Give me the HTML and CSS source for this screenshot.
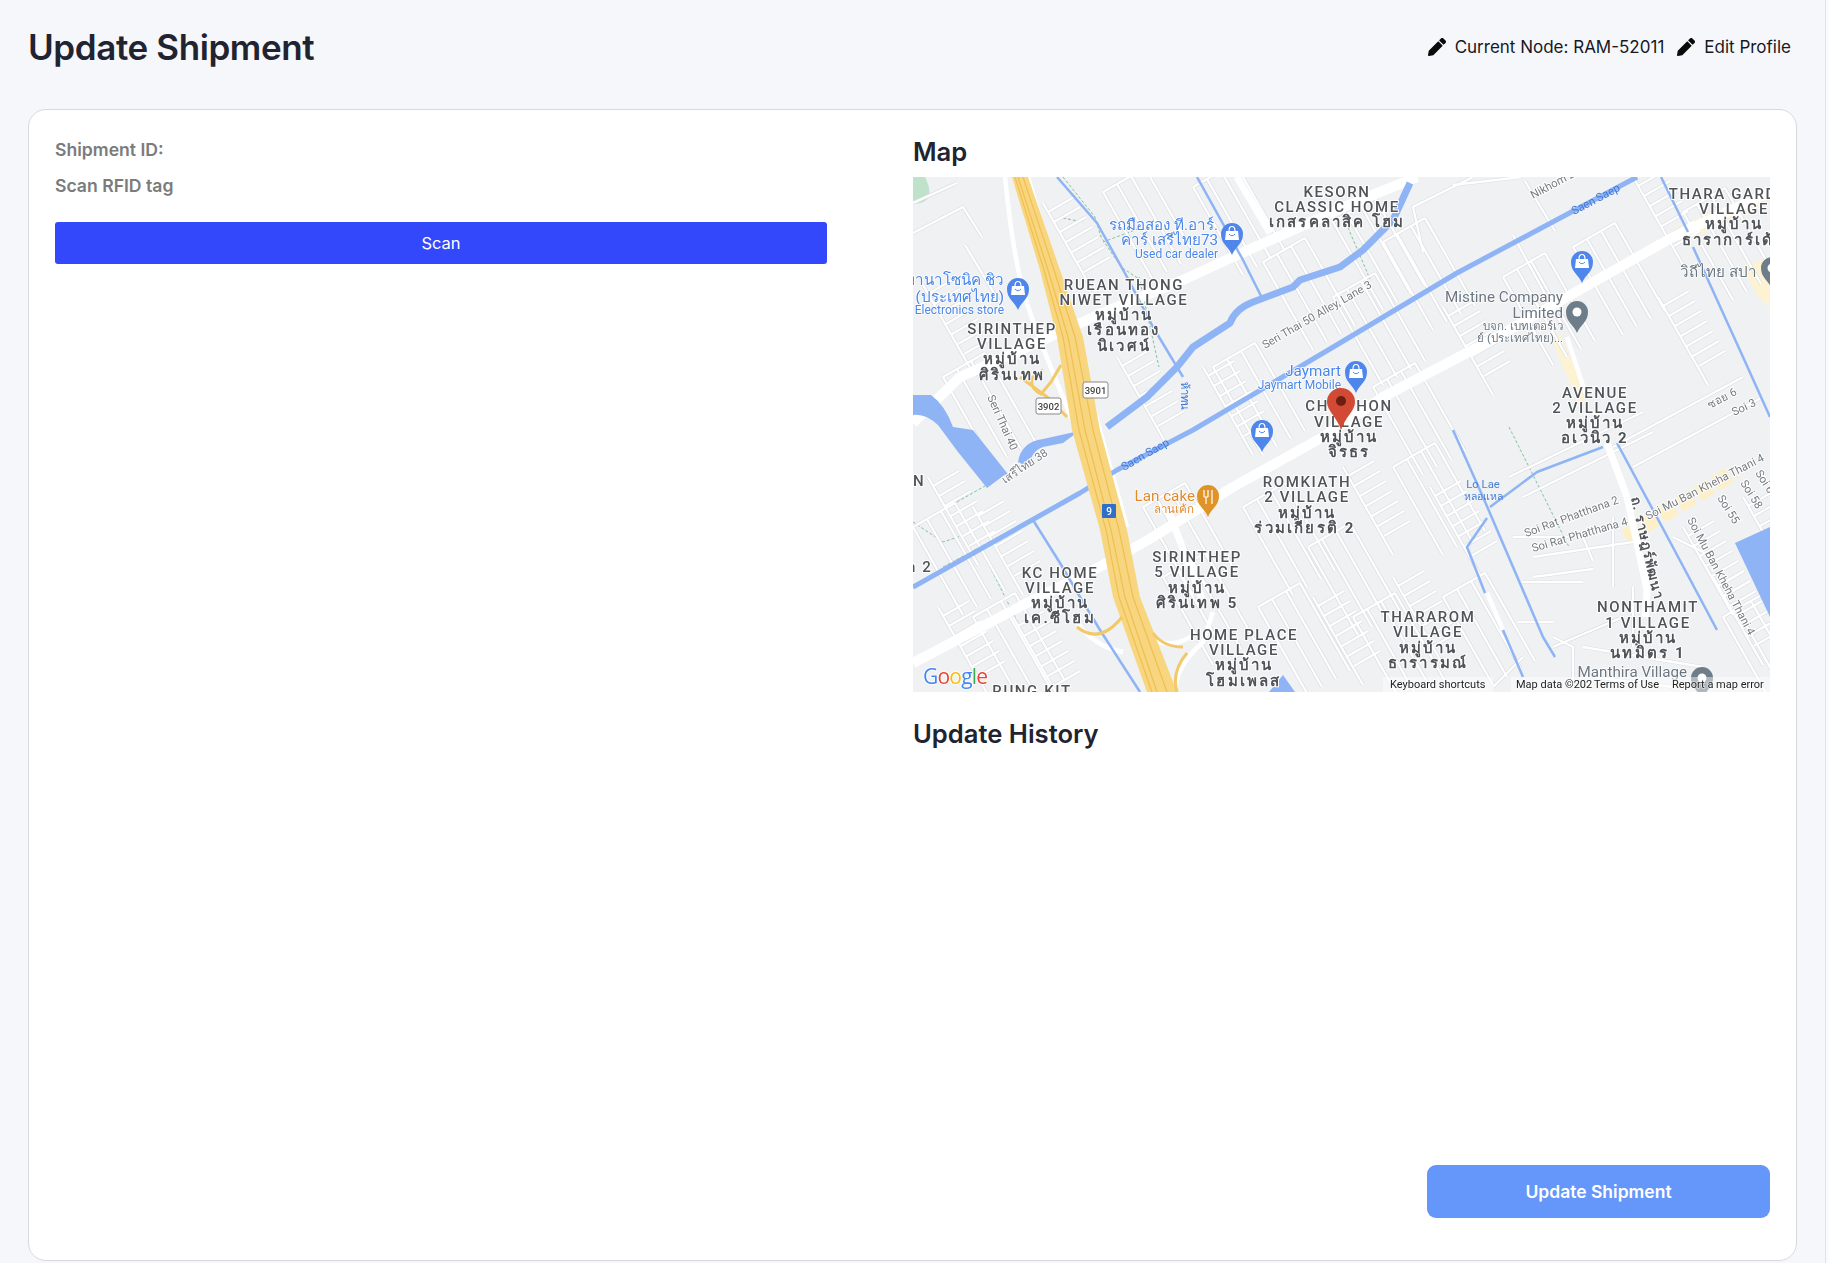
FILE: index.html
```html
<!DOCTYPE html>
<html lang="en">
<head>
<meta charset="utf-8">
<title>Update Shipment</title>
<link rel="stylesheet" href="styles.css">
</head>
<body>
<div class="page">
<header class="topbar">
  <h1 class="title">Update Shipment</h1>
  <nav class="nav">
    <a class="nav-item"><svg class="pencil" viewBox="0 0 512 512"><path d="M497.900 142.100l-46.100 46.100c-4.700 4.700-12.300 4.700-17 0l-111-111c-4.700-4.700-4.700-12.300 0-17l46.100-46.100c18.700-18.700 49.100-18.700 67.900 0l60.100 60.100c18.800 18.700 18.800 49.100 0 67.900zM284.200 99.800L21.600 362.400.4 483.900c-2.900 16.400 11.400 30.600 27.800 27.800l121.500-21.300 262.600-262.600c4.700-4.700 4.700-12.300 0-17l-111-111c-4.800-4.700-12.400-4.700-17.100 0z"/></svg>Current Node: RAM-52011</a>
    <a class="nav-item"><svg class="pencil" viewBox="0 0 512 512"><path d="M497.900 142.100l-46.100 46.100c-4.700 4.700-12.300 4.700-17 0l-111-111c-4.700-4.700-4.700-12.300 0-17l46.100-46.100c18.700-18.700 49.100-18.700 67.900 0l60.100 60.100c18.800 18.700 18.800 49.100 0 67.900zM284.200 99.800L21.600 362.400.4 483.900c-2.900 16.400 11.400 30.600 27.800 27.800l121.500-21.300 262.600-262.600c4.700-4.700 4.700-12.300 0-17l-111-111c-4.800-4.700-12.400-4.700-17.100 0z"/></svg>Edit Profile</a>
  </nav>
</header>
<main class="card">
  <section class="col-left">
    <p class="field">Shipment ID:</p>
    <p class="field">Scan RFID tag</p>
    <button class="scan">Scan</button>
  </section>
  <section class="col-right">
    <h2 class="heading map-heading">Map</h2>
    <svg class="map" viewBox="0 0 857 515">
      <defs>
        <path id="ca" d="M0 0L50 88M5 9l26-15M11 19l26-15M17 29l26-15M23 39l26-15M29 49l26-15M35 59l26-15M41 69l26-15"/>
        <path id="cb" d="M0 0L50 88M14-8L64 80M28-16L78 72M42-24L92 64M0 0L42-24"/>
        <g id="streets">
          <use href="#ca" x="10" y="108"/><use href="#ca" x="130" y="26"/><use href="#ca" x="204" y="180"/><use href="#ca" x="290" y="190"/><use href="#ca" x="517" y="310"/><use href="#ca" x="770" y="350"/><use href="#ca" x="800" y="400"/><use href="#ca" x="15" y="300"/><use href="#ca" x="60" y="330"/><use href="#ca" x="530" y="130"/><use href="#ca" x="430" y="290"/><use href="#ca" x="480" y="400"/><use href="#ca" x="100" y="440"/><use href="#ca" x="25" y="430"/><use href="#ca" x="400" y="420"/><use href="#ca" x="745" y="120"/><use href="#ca" x="830" y="320"/><use href="#ca" x="720" y="0"/>
          <use href="#cb" x="190" y="15"/><use href="#cb" x="280" y="10"/><use href="#cb" x="350" y="85"/><use href="#cb" x="420" y="45"/><use href="#cb" x="470" y="65"/><use href="#cb" x="590" y="100"/><use href="#cb" x="660" y="70"/><use href="#cb" x="770" y="35"/><use href="#cb" x="300" y="190"/><use href="#cb" x="420" y="120"/><use href="#cb" x="460" y="210"/><use href="#cb" x="330" y="330"/><use href="#cb" x="395" y="370"/><use href="#cb" x="480" y="290"/><use href="#cb" x="30" y="200"/><use href="#cb" x="0" y="350"/><use href="#cb" x="60" y="440"/><use href="#cb" x="250" y="400"/><use href="#cb" x="345" y="430"/><use href="#cb" x="440" y="440"/><use href="#cb" x="530" y="420"/><use href="#cb" x="810" y="440"/><use href="#cb" x="230" y="330"/>
          <path d="M0 26L44 6M0 56L50 30L69 60M52 68L87 126M540 8L608 0M560 0L500 30L510 75M612 4L642 54M600 58L650 150M605 405H670M620 400L680 392M620 380L720 365M600 360L670 360L680 384M605 445H640M640 470L710 440M640 460L660 470V510M670 470L790 490M680 500L760 510M610 480L580 510M760 360L800 380M720 410V470M700 340V410M596 300L730 235M610 320L740 255M700 270L830 200M720 290L850 220"/>
        </g>
      </defs>
      <rect class="land" width="857" height="515"/>
      <path class="park" d="M0 0H12Q18 12 16 20Q10 28 0 26Z"/>
      <path class="comm" d="M760 52L857 10V22L770 66ZM830 90L857 80V130L845 120ZM637 160L646 156L676 222L666 226Z"/>
      <path class="comm-b" d="M712 360L745 340L790 314L822 295"/>
      <path class="dash" d="M150 0L182 40L188 60L208 90L226 102M150 41L170 45M190 65L230 50M226 100L246 190M427 32L457 102M44 325L114 285M0 345L30 365L60 355M72 380L117 470M596 250L656 370M30 390L160 320"/>
      <use class="st-case" href="#streets"/>
      <use class="st-fill" href="#streets"/>
      <path class="road" d="M0 486L114 426L200 383L240 360L320 310L410 260L470 220L584 160L654 120L760 60L857 15"/>
      <path class="road" d="M0 246L47 200L130 163L187 137L270 103L320 80L447 23L504 0"/>
      <path class="road thin" d="M324 0L357 56M254 330L290 424M108 0Q112 60 150 120M694 266L714 320L734 413L732 440"/>
      <path class="road slim" d="M92 0Q100 80 112 120T175 280L188 345L232 466L250 515M115 0Q135 70 150 120L186 250L214 350M160 440Q180 470 210 475M218 445Q250 480 280 458M574 416L590 453M654 160L672 215M262 515Q262 490 290 465L300 435"/>
      <path class="canal" d="M0 410L167 316L204 293L280 253L427 166L477 136L544 96L634 48L724 0"/>
      <path class="canal wide" d="M194 250L234 220L264 190L280 170L317 146Q322 132 340 125L380 110L387 103L427 90L450 73L480 43L497 6"/>
      <path class="canal-thin" d="M144 0L184 46L214 100L240 150L270 200M284 0L330 83L350 123M748 0L775 55M780 70L830 180L857 240"/>
      <path class="canal-thin" d="M540 253L570 320L630 460L642 480M577 330L624 295L690 270M574 341L554 370L572 416M590 453L610 500M704 266L747 346L804 453M120 343L147 386L167 420L187 453L227 515"/>
      <path class="water" d="M0 218H18Q32 228 40 250L60 253L94 296L74 311L45 275L25 248Q12 236 0 238ZM105 285Q108 265 130 262L166 254L150 266L130 270Q118 274 116 290Z"/>
      <path class="water" d="M822 366L857 350V440ZM356 515L370 498L382 515Z"/>
      <path class="hw" d="M99 0H115L147 93L170 160L187 253L214 353L227 420L264 515H234L200 420L187 353L159 253L144 160L127 93Z"/>
      <path class="hw-line" d="M105 0L135 93L155 160L172 253L198 353L212 420L244 515M110 0L141 93L162 160L180 253L206 353L220 420L254 515M102 0L131 93L150 160L166 253L193 353L206 420L239 515"/>
      <path class="ramp" d="M164 450Q187 468 209 440M240 456Q250 470 270 470M274 476Q258 495 264 515M107 200L134 220L154 240M130 193L120 200Q115 210 128 217L138 205L148 188"/>
      <g class="village">
        <text x="211" y="113">RUEAN THONG</text><text x="211" y="128">NIWET VILLAGE</text><text class="th" x="211" y="143">หมู่บ้าน</text><text class="th" x="211" y="158">เรือนทอง</text><text class="th" x="211" y="174">นิเวศน์</text>
        <text x="99" y="157">SIRINTHEP</text><text x="99" y="172">VILLAGE</text><text class="th" x="99" y="187">หมู่บ้าน</text><text class="th" x="99" y="203">ศิรินเทพ</text>
        <text x="424" y="20">KESORN</text><text x="424" y="35">CLASSIC HOME</text><text class="th" x="424" y="50">เกสรคลาสิค โฮม</text>
        <text x="821" y="22">THARA GARDEN</text><text x="821" y="37">VILLAGE</text><text class="th" x="821" y="52">หมู่บ้าน</text><text class="th" x="821" y="68">ธาราการ์เด้น</text>
        <text x="682" y="221">AVENUE</text><text x="682" y="236">2 VILLAGE</text><text class="th" x="682" y="251">หมู่บ้าน</text><text class="th" x="682" y="266">อเวนิว 2</text>
        <text x="436" y="234">CHITTHON</text><text x="436" y="250">VILLAGE</text><text class="th" x="436" y="265">หมู่บ้าน</text><text class="th" x="436" y="280">จิรธร</text>
        <text x="394" y="310">ROMKIATH</text><text x="394" y="325">2 VILLAGE</text><text class="th" x="394" y="341">หมู่บ้าน</text><text class="th" x="392" y="356">ร่วมเกียรติ 2</text>
        <text x="284" y="385">SIRINTHEP</text><text x="284" y="400">5 VILLAGE</text><text class="th" x="284" y="416">หมู่บ้าน</text><text class="th" x="284" y="431">ศิรินเทพ 5</text>
        <text x="147" y="401">KC HOME</text><text x="147" y="416">VILLAGE</text><text class="th" x="147" y="431">หมู่บ้าน</text><text class="th" x="147" y="446">เค.ซีโฮม</text>
        <text x="331" y="463">HOME PLACE</text><text x="331" y="478">VILLAGE</text><text class="th" x="331" y="493">หมู่บ้าน</text><text class="th" x="331" y="509">โฮมเพลส</text>
        <text x="119" y="519">RUNG KIT</text>
        <text x="515" y="445">THARAROM</text><text x="515" y="460">VILLAGE</text><text class="th" x="515" y="476">หมู่บ้าน</text><text class="th" x="515" y="491">ธารารมณ์</text>
        <text x="735" y="435">NONTHAMIT</text><text x="735" y="451">1 VILLAGE</text><text class="th" x="735" y="466">หมู่บ้าน</text><text class="th" x="735" y="481">นทมิตร 1</text>
        <text class="edge" x="0" y="309">N</text><text class="edge" x="-6" y="395">n 2</text>
      </g>
      <g class="street">
        <text transform="translate(352 172) rotate(-30)">Seri Thai 50 Alley, Lane 3</text>
        <text transform="translate(74 220) rotate(66)">Seri Thai 40</text>
        <text transform="translate(92 307) rotate(-34)">เสรีไทย 38</text>
        <text transform="translate(620 22) rotate(-28)">Nikhom 2</text>
        <text transform="translate(797 232) rotate(-28)">ซอย 6</text>
        <text transform="translate(821 239) rotate(-25)">Soi 3</text>
        <text transform="translate(613 360) rotate(-20)">Soi Rat Phatthana 2</text>
        <text transform="translate(620 375) rotate(-16)">Soi Rat Phatthana 4</text>
        <text transform="translate(735 343) rotate(-27)">Soi Mu Ban Kheha Thani 4</text>
        <text transform="translate(774 343) rotate(62)">Soi Mu Ban Kheha Thani 4</text>
        <text transform="translate(804 321) rotate(58)">Soi 55</text>
        <text transform="translate(827 306) rotate(58)">Soi 58</text>
        <text transform="translate(842 296) rotate(58)">Soi 6</text>
      </g>
      <g class="street-blue">
        <text transform="translate(661 38) rotate(-28)">Saen Saep</text>
        <text transform="translate(211 294) rotate(-30)">Saen Saep</text>
        <text transform="translate(268 205) rotate(90)">ห้าทน</text>
      </g>
      <text class="vroad" transform="translate(718 321) rotate(77)">ถ. ราษฎร์พัฒนา</text>
      <g class="poi-blue">
        <text x="305" y="53">รถมือสอง ที.อาร์.</text><text x="305" y="68">คาร์ เสรีไทย73</text><text class="sm" x="305" y="81">Used car dealer</text>
        <text x="91" y="108">พานาโซนิค ชิว</text><text x="91" y="125">(ประเทศไทย)</text><text class="sm" x="91" y="137">Electronics store</text>
        <text x="428" y="199">Jaymart</text><text class="sm" x="428" y="212">Jaymart Mobile</text>
      </g>
      <g class="poi-grey">
        <text x="650" y="125">Mistine Company</text><text x="650" y="141">Limited</text><text class="sm" x="650" y="153">บจก. เบทเตอร์เว</text><text class="sm" x="650" y="165">ย์ (ประเทศไทย)...</text>
        <text x="844" y="100">วิถีไทย สปา</text>
        <text x="774" y="500">Manthira Village</text>
      </g>
      <g class="poi-orange"><text x="282" y="324">Lan cake</text><text class="sm" x="281" y="336">ลานเค้ก</text></g>
      <g class="lolae"><text x="570" y="311">Lo Lae</text><text class="sm" x="570" y="323">หลอแหล</text></g>
      <defs>
        <g id="bag"><path class="pin-b" d="M0 32C-3 24-11 21-11 11A11 11 0 0 1 11 11C11 21 3 24 0 32Z"/><path class="bag" d="M-6 8H6L7 17H-7Z"/><path class="handle" d="M-3 8Q-3 3.500 0 3.500T3 8"/><path class="bagline" d="M-3 11Q0 14.500 3 11"/></g>
        <g id="gpin"><path class="pin-g" d="M0 32C-3 24-11 21-11 11A11 11 0 0 1 11 11C11 21 3 24 0 32Z"/><circle class="pin-dot" cy="11" r="4.500"/></g>
      </defs>
      <use href="#bag" x="319" y="46"/><use href="#bag" x="105" y="101"/><use href="#bag" x="443" y="184"/><use href="#bag" x="349" y="243"/><use href="#bag" x="669" y="74"/>
      <use href="#gpin" x="664" y="124"/><use href="#gpin" x="859" y="80"/><use href="#gpin" x="789" y="490"/>
      <path class="pin-o" d="M295 340C292 332 284 329 284 319A11 11 0 0 1 306 319C306 329 298 332 295 340Z"/>
      <path class="fork" d="M291 313V320M295 313V320M299 313V327M291 320H295M293 320V327"/>
      <g class="shield"><rect x="170" y="205" width="25" height="16" rx="2"/><text x="182.500" y="217">3901</text><rect x="123" y="221" width="25" height="16" rx="2"/><text x="135.500" y="233">3902</text></g>
      <rect class="r9" x="189" y="327" width="14" height="14" rx="1"/><text class="r9t" x="196" y="338">9</text>
      <path class="marker" d="M428 253C424 240 414 234 414 225A14 14 0 0 1 442 225C442 234 432 240 428 253Z"/><circle class="marker-dot" cx="428" cy="224" r="5"/>
      <text class="logo" x="10" y="507"><tspan class="g-b">G</tspan><tspan class="g-r">o</tspan><tspan class="g-y">o</tspan><tspan class="g-b">g</tspan><tspan class="g-g">l</tspan><tspan class="g-r">e</tspan></text>
      <rect class="attr-bg" x="470" y="500" width="110" height="15"/><rect class="attr-bg" x="598" y="500" width="259" height="15"/>
      <g class="attr"><text x="477" y="511">Keyboard shortcuts</text><text x="603" y="511">Map data ©202</text><text x="681" y="511">Terms of Use</text><text x="759" y="511">Report a map error</text></g>
    </svg>
    <h2 class="heading history">Update History</h2>
    <div class="actions"><button class="update">Update Shipment</button></div>
  </section>
</main>
</div>
</body>
</html>
```
FILE: styles.css
```css
* { box-sizing: border-box; }
html, body { margin: 0; height: 100%; }
html { background: #fafbfc; }
body { font-family: Inter, "Noto Sans", sans-serif; color: #1f2430; overflow: hidden; }
.page { width: 1826px; height: 1263px; padding: 0 0 2px 28px; display: flex; flex-direction: column; background: #f6f7fb; border-right: 1px solid #e2e3e6; }
.topbar { height: 109px; padding: 0 6px 15px 0; width: 1769px; display: flex; align-items: center; justify-content: space-between; }
.title { margin: 0; font-size: 35px; font-weight: 600; letter-spacing: -0.4px; }
.nav { display: flex; gap: 13px; }
.nav-item { display: flex; align-items: center; gap: 9px; font-size: 17px; color: #16191f; }
.pencil { width: 18px; height: 18px; fill: #0a0a0a; }
.card { width: 1769px; height: 1152px; background: #fff; border: 1px solid #d8d9dc; border-radius: 18px; padding: 26px 26px 42px; display: flex; gap: 86px; }
.col-left { width: 772px; padding-top: 2px; }
.field { margin: 0 0 13px; font-size: 17.600px; font-weight: 600; line-height: 23px; color: #7b7b7b; }
.scan { display: block; width: 100%; height: 42px; margin-top: 25px; border: 0; border-radius: 3px; background: #3347fb; color: #fff; font: 400 16.500px Inter, sans-serif; }
.col-right { flex: 1; display: flex; flex-direction: column; min-width: 0; }
.heading { margin: 0; font-size: 25.600px; font-weight: 600; line-height: 42px; color: #1f2430; }
.map-heading { line-height: 31px; padding-bottom: 10px; }
.map { display: block; width: 857px; height: 515px; flex: none; filter: blur(0.4px); }
.history { margin-top: 21px; }
.actions { margin-top: auto; display: flex; justify-content: flex-end; }
.update { width: 343px; height: 53px; border: 0; border-radius: 9px; background: #6596fa; color: #fff; font: 600 17.500px Inter, sans-serif; }

.land { fill: #eff1f3; }
.park { fill: #bfe3ca; }
.comm { fill: #fdf3d3; }
.comm-b { fill: none; stroke: #fdf0c8; stroke-width: 16; stroke-dasharray: 16 5; }
.dash { fill: none; stroke: #86c29a; stroke-width: 1; stroke-dasharray: 3 2; }
.st-case { fill: none; stroke: #dcdee2; stroke-width: 3.600; }
.st-fill { fill: none; stroke: #fff; stroke-width: 2.300; }
.road { fill: none; stroke: #fff; stroke-width: 10; stroke-linejoin: round; }
.road.thin { stroke-width: 7; }
.road.slim { stroke-width: 4.500; }
.canal { fill: none; stroke: #8fb4f5; stroke-width: 5; stroke-linejoin: round; }
.canal.wide { stroke-width: 7; }
.canal-thin { fill: none; stroke: #8fb4f5; stroke-width: 2.500; stroke-linejoin: round; }
.water { fill: #8fb4f5; }
.hw { fill: #f8d67f; }
.hw-line { fill: none; stroke: #f0bf50; stroke-width: 1.200; }
.ramp { fill: none; stroke: #f3c866; stroke-width: 3; }
.village text { font: 500 15px Roboto, "Noto Sans", sans-serif; letter-spacing: 1.600px; fill: #505357; stroke: #fff; stroke-width: 2px; paint-order: stroke; text-anchor: middle; }
.village .th { font-weight: 700; letter-spacing: 2.200px; }
.village .edge { text-anchor: start; }
.street text { font: 400 11.300px Roboto, sans-serif; fill: #777b80; stroke: #fff; stroke-width: 2px; paint-order: stroke; }
.street-blue text { font: 400 11.300px Roboto, sans-serif; fill: #3f78d8; }
.vroad { font: 700 13.500px Roboto, sans-serif; letter-spacing: 1px; fill: #505357; stroke: #fff; stroke-width: 2px; paint-order: stroke; }
.poi-blue text { font: 400 15.200px Roboto, sans-serif; fill: #4a86e8; stroke: #fff; stroke-width: 1.500px; paint-order: stroke; text-anchor: end; }
.poi-blue .sm { font-size: 12px; }
.poi-grey text { font: 400 15.200px Roboto, sans-serif; fill: #6b7680; stroke: #fff; stroke-width: 1.500px; paint-order: stroke; text-anchor: end; }
.poi-grey .sm { font-size: 11.500px; }
.poi-orange text { font: 400 15.200px Roboto, sans-serif; fill: #e08a2c; stroke: #fff; stroke-width: 1.500px; paint-order: stroke; text-anchor: end; }
.poi-orange .sm { font-size: 11.500px; }
.lolae text { font: 400 11.300px Roboto, sans-serif; fill: #4a7fd6; text-anchor: middle; }
.lolae .sm { font-size: 10.500px; }
.pin-b { fill: #4f86ec; }
.bag { fill: #fff; }
.handle { fill: none; stroke: #fff; stroke-width: 1.200; }
.bagline { fill: none; stroke: #4f86ec; stroke-width: 1; }
.pin-g { fill: #6d7d89; }
.pin-dot { fill: #fff; }
.pin-o { fill: #e09326; }
.fork { fill: none; stroke: #fff; stroke-width: 1.200; }
.shield rect { fill: #fff; stroke: #8a8a8a; stroke-width: 1; }
.shield text { font: 500 9.500px Roboto, sans-serif; fill: #444; text-anchor: middle; }
.r9 { fill: #2f6fc9; }
.r9t { font: 500 10px Roboto, sans-serif; fill: #fff; text-anchor: middle; }
.marker { fill: #d24a33; }
.marker-dot { fill: #6e1d12; }
.logo { font: 500 21px "Open Sans", Roboto, sans-serif; letter-spacing: -0.800px; stroke: #fff; stroke-width: 1.500px; paint-order: stroke; }
.g-b { fill: #4285f4; }
.g-r { fill: #ea4335; }
.g-y { fill: #fbbc05; }
.g-g { fill: #34a853; }
.attr-bg { fill: rgba(255,255,255,.45); }
.attr text { font: 400 11px Roboto, sans-serif; fill: #222; stroke: rgba(255,255,255,.6); stroke-width: 1.500px; paint-order: stroke; }
```
